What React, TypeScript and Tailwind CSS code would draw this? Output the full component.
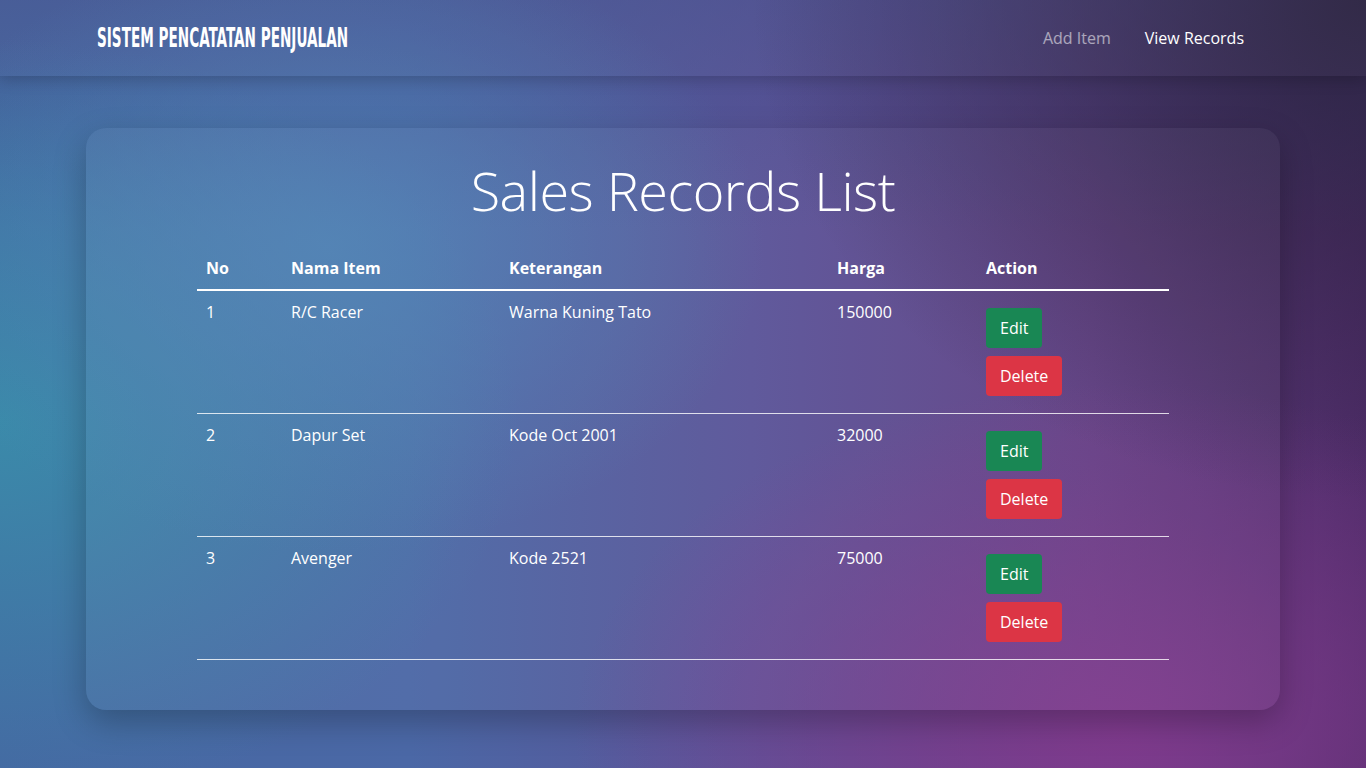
import React from "react";

const rows = [
  { no: 1, nama: "R/C Racer", ket: "Warna Kuning Tato", harga: "150000" },
  { no: 2, nama: "Dapur Set", ket: "Kode Oct 2001", harga: "32000" },
  { no: 3, nama: "Avenger", ket: "Kode 2521", harga: "75000" },
];

export default function App() {
  return (
    <div className="min-h-[768px] w-full bg-[image:radial-gradient(ellipse_45%_65%_at_100%_0%,rgba(42,34,62,0.92),rgba(42,34,62,0)),radial-gradient(ellipse_32%_40%_at_24%_32%,rgba(80,132,182,0.75),rgba(80,132,182,0)),radial-gradient(ellipse_38%_50%_at_0%_55%,rgba(58,140,170,0.95),rgba(58,140,170,0)),radial-gradient(ellipse_40%_45%_at_82%_95%,rgba(130,58,142,0.9),rgba(130,58,142,0)),linear-gradient(to_bottom,rgba(66,76,138,0.55),rgba(66,76,138,0)_30%),linear-gradient(to_right,#4568a2_0%,#4b68a6_30%,#5a5498_55%,#613f84_80%,#4e2c68_100%)] font-['Open_Sans','Noto_Sans',sans-serif] text-white">
      <nav className="h-[76px] bg-white/[0.03] shadow-[0_4px_14px_rgba(0,0,0,0.18)] flex items-center">
        <div className="w-full px-[97px] flex items-center justify-between">
          <div className="font-['DejaVu_Sans_Condensed',sans-serif] font-bold text-[24px] leading-none tracking-[0px] scale-x-[0.63] scale-y-[1.12] origin-left whitespace-nowrap">
            SISTEM PENCATATAN PENJUALAN
          </div>
          <div className="flex items-center gap-[34px] text-[16px] pr-[25px]">
            <span className="text-white/55">Add Item</span>
            <span className="text-white">View Records</span>
          </div>
        </div>
      </nav>

      <div className="px-[86px] pt-[52px] pb-[58px]">
        <div className="rounded-[20px] bg-white/[0.04] shadow-[0_12px_32px_rgba(0,0,0,0.25)] pt-[24px] pb-[50px] px-[111px]">
          <h1 className="text-center font-light text-[54px] leading-[76px] tracking-[-0.5px]">
            Sales Records List
          </h1>
          <table className="w-full mt-[26px] text-[16px] border-collapse">
            <colgroup>
              <col className="w-[86px]" />
              <col className="w-[218px]" />
              <col className="w-[328px]" />
              <col className="w-[149px]" />
              <col />
            </colgroup>
            <thead>
              <tr className="border-b-2 border-white">
                <th className="text-left font-bold px-[9px] pt-[2px] pb-[9px] leading-[24px]">No</th>
                <th className="text-left font-bold px-[8px] pt-[2px] pb-[9px] leading-[24px]">Nama Item</th>
                <th className="text-left font-bold px-[8px] pt-[2px] pb-[9px] leading-[24px]">Keterangan</th>
                <th className="text-left font-bold px-[8px] pt-[2px] pb-[9px] leading-[24px]">Harga</th>
                <th className="text-left font-bold px-[8px] pt-[2px] pb-[9px] leading-[24px]">Action</th>
              </tr>
            </thead>
            <tbody>
              {rows.map((r) => (
                <tr key={r.no} className="border-b border-white/80 align-top">
                  <td className="px-[9px] pt-[9px] leading-[24px]">{r.no}</td>
                  <td className="px-[8px] pt-[9px] leading-[24px]">{r.nama}</td>
                  <td className="px-[8px] pt-[9px] leading-[24px]">{r.ket}</td>
                  <td className="px-[8px] pt-[9px] leading-[24px]">{r.harga}</td>
                  <td className="px-[8px] pt-[17px] pb-[17px]">
                    <div className="flex flex-col items-start gap-[8px]">
                      <button className="h-[40px] px-[14px] rounded-[4px] bg-[#198754] text-white text-[16px]">Edit</button>
                      <button className="h-[40px] px-[14px] rounded-[4px] bg-[#dc3545] text-white text-[16px]">Delete</button>
                    </div>
                  </td>
                </tr>
              ))}
            </tbody>
          </table>
        </div>
      </div>
    </div>
  );
}
